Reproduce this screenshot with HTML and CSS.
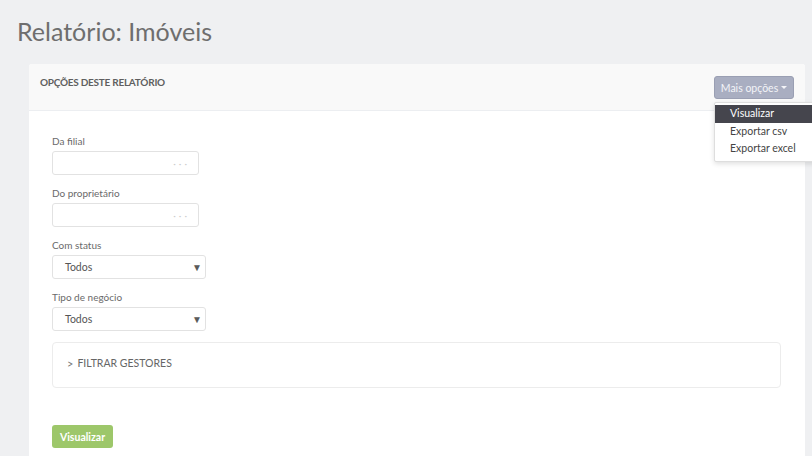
FILE: index.html
```html
<!DOCTYPE html>
<html lang="pt">
<head>
<meta charset="utf-8">
<title>Relatório: Imóveis</title>
<link rel="stylesheet" href="styles.css">
</head>
<body>
<div class="page">
  <h1 class="title">Relatório: Imóveis</h1>
  <div class="panel">
    <div class="panel-head">
      <span class="panel-title">OPÇÕES DESTE RELATÓRIO</span>
      <div class="more">
        <button class="more-btn" type="button">Mais opções <span class="caret"></span></button>
        <ul class="menu">
          <li class="menu-item active">Visualizar</li>
          <li class="menu-item">Exportar csv</li>
          <li class="menu-item">Exportar excel</li>
        </ul>
      </div>
    </div>
    <div class="panel-body">
      <div class="group">
        <label class="label">Da filial</label>
        <div class="lookup"><span class="dots">&middot;&middot;&middot;</span></div>
      </div>
      <div class="group">
        <label class="label">Do proprietário</label>
        <div class="lookup"><span class="dots">&middot;&middot;&middot;</span></div>
      </div>
      <div class="group">
        <label class="label">Com status</label>
        <div class="select"><span>Todos</span><span class="arrow">&#9660;</span></div>
      </div>
      <div class="group">
        <label class="label">Tipo de negócio</label>
        <div class="select"><span>Todos</span><span class="arrow">&#9660;</span></div>
      </div>
      <div class="filter">
        <span class="chev">&gt;</span> FILTRAR GESTORES
      </div>
      <button class="submit" type="button">Visualizar</button>
    </div>
  </div>
</div>
</body>
</html>
```
FILE: styles.css
```css
* { box-sizing: border-box; }
html, body { margin: 0; padding: 0; overflow: hidden; }
body {
  background: #eff0f2;
  font-family: Lato, "Open Sans", sans-serif;
  color: #666;
  width: 812px;
  height: 456px;
}
.page {
  padding: 16px 7px 0 17px;
}
.title {
  margin: 0;
  font-size: 25px;
  font-weight: 400;
  line-height: 30px;
  color: #6e6e6e;
  height: 48px;
}
.panel {
  margin-left: 12px;
  background: #fff;
  border-radius: 3px 3px 0 0;
  height: 420px;
}
.panel-head {
  height: 47px;
  background: #f9f9f9;
  border-bottom: 1px solid #eceef1;
  border-radius: 3px 3px 0 0;
  display: flex;
  justify-content: space-between;
  align-items: flex-start;
  padding: 12px 11px 0 11px;
}
.panel-title {
  font-size: 10px;
  font-weight: 700;
  color: #5f5f5f;
  line-height: 12px;
  letter-spacing: -0.25px;
}
.more {
  position: relative;
}
.more-btn {
  font-family: Lato, sans-serif;
  font-size: 10.5px;
  color: #f3f4f8;
  background: #a9aec1;
  border: 1px solid #9a9fb3;
  border-radius: 3px;
  height: 23px;
  width: 80px;
  padding: 0;
  display: flex;
  align-items: center;
  justify-content: center;
  gap: 3px;
}
.caret {
  display: inline-block;
  width: 0;
  height: 0;
  border-left: 3px solid transparent;
  border-right: 3px solid transparent;
  border-top: 3px solid #f3f4f8;
}
.menu {
  position: absolute;
  top: 26px;
  left: 0;
  width: 150px;
  margin: 0;
  padding: 2px 0 3px;
  list-style: none;
  background: #fff;
  border: 1px solid #dedede;
  border-radius: 2px;
  box-shadow: 0 2px 5px rgba(0,0,0,0.12);
  z-index: 5;
}
.menu-item {
  font-size: 10.5px;
  line-height: 17.5px;
  padding-left: 15px;
  color: #444;
}
.menu-item.active {
  background: #45454d;
  color: #fff;
}
.panel-body {
  padding: 23px 24px 0 23px;
}
.group {
  margin-bottom: 11px;
}
.label {
  display: block;
  font-size: 10px;
  line-height: 14px;
  margin-bottom: 3px;
  color: #6a6a6a;
}
.lookup {
  width: 147px;
  height: 24px;
  border: 1px solid #e2e2e2;
  border-radius: 3px;
  display: flex;
  justify-content: flex-end;
  align-items: center;
  padding-right: 8px;
}
.dots {
  color: #cdcdcd;
  font-size: 10px;
  letter-spacing: 3px;
}
.select {
  width: 154px;
  height: 24px;
  border: 1px solid #e2e2e2;
  border-radius: 3px;
  display: flex;
  justify-content: space-between;
  align-items: center;
  padding: 0 3px 0 12px;
  font-size: 10.5px;
  color: #555;
}
.arrow {
  font-size: 10px;
  color: #5a5a5a;
}
.filter {
  margin-top: 11px;
  height: 46px;
  border: 1px solid #ececec;
  border-radius: 4px;
  display: flex;
  align-items: center;
  padding: 0 0 4px 14px;
  font-size: 10.5px;
  color: #666;
  gap: 4px;
}
.chev {
  font-size: 11px;
  color: #777;
}
.submit {
  display: block;
  margin-top: 37px;
  height: 23px;
  width: 61px;
  border: none;
  border-radius: 3px;
  background: #9dc76a;
  color: #fff;
  font-family: Lato, sans-serif;
  font-size: 10.5px;
  font-weight: 700;
  padding: 0;
}
```
